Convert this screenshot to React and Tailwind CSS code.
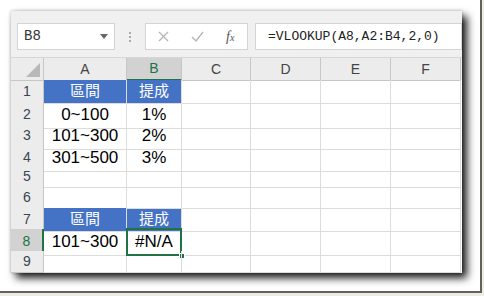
import React from 'react';

const rows = [
    { n: 1, h: 'h-[22px]', a: '區間', b: '提成', head: true },
    { n: 2, h: 'h-[21px]', a: '0~100', b: '1%' },
    { n: 3, h: 'h-[22px]', a: '101~300', b: '2%' },
    { n: 4, h: 'h-[21px]', a: '301~500', b: '3%' },
    { n: 5, h: 'h-[21px]' },
    { n: 6, h: 'h-[21px]' },
    { n: 7, h: 'h-[21px]', a: '區間', b: '提成', head: true },
    { n: 8, h: 'h-[22px]', a: '101~300', b: '#N/A', sel: true },
    { n: 9, h: 'h-[21px]' },
];

const gridCols = 'grid grid-cols-[33px_83px_55px_69px_70px_70px_70px]';
const cellFont = "font-['Liberation_Sans','Noto_Sans_CJK_TC',sans-serif]";

const Cell = ({ children, className = '' }) => (
    <div className={`flex items-center justify-center border-r border-b border-[#dcdcdc] ${className}`}>
        {children}
    </div>
);

const App = () => {
    return (
        <div className="w-[484px] h-[296px] bg-[#ececE4] overflow-hidden">
            <div className="w-[482px] h-[293px] bg-white border-r-2 border-b-2 border-[#62625a] pl-[11px] pt-[11px]">
                <div className="w-[451px] h-[262px] bg-white shadow-[5px_5px_8px_rgba(0,0,0,0.9),0_0_3px_rgba(0,0,0,0.25)] flex flex-col">
                    {/* formula bar */}
                    <div className="h-[47px] bg-[#f0f0f0] flex items-start pt-[12px] pl-[6px] border-b border-[#d6d6d6]">
                        <div className="w-[98px] h-[27px] bg-white border border-[#d4d4d4] flex items-center justify-between pl-[6px] pr-[6px]">
                            <span className="font-['Liberation_Mono',monospace] text-[14px] text-[#333]">B8</span>
                            <svg width="8" height="5" viewBox="0 0 8 5"><path d="M0 0h8L4 5z" fill="#666" /></svg>
                        </div>
                        <div className="w-[30px] h-[27px] flex flex-col items-center justify-center gap-[2px]">
                            <span className="w-[2px] h-[2px] bg-[#aaa]" />
                            <span className="w-[2px] h-[2px] bg-[#aaa]" />
                            <span className="w-[2px] h-[2px] bg-[#aaa]" />
                        </div>
                        <div className="w-[103px] h-[27px] bg-white border border-[#d4d4d4] flex items-center pl-[12px] gap-[22px]">
                            <svg width="11" height="11" viewBox="0 0 11 11"><path d="M1 1l9 9M10 1l-9 9" stroke="#b4b4b4" strokeWidth="1.3" /></svg>
                            <svg width="13" height="11" viewBox="0 0 13 11"><path d="M1 6l4 4 7-9" stroke="#b4b4b4" strokeWidth="1.3" fill="none" /></svg>
                            <span className="font-['Liberation_Serif',serif] italic text-[14px] text-[#555] leading-none">f<span className="text-[10px]">x</span></span>
                        </div>
                        <div className="ml-[7px] w-[207px] h-[27px] bg-white border border-[#d4d4d4] flex items-center pl-[12px]">
                            <span className="font-['Liberation_Mono',monospace] text-[13px] text-[#222]">=VLOOKUP(A8,A2:B4,2,0)</span>
                        </div>
                    </div>

                    {/* column headers */}
                    <div className={`${gridCols} h-[22px] bg-[#ececec] text-[14px] text-[#444] font-['Liberation_Sans',sans-serif]`}>
                        <div className="relative border-r border-b border-[#c6c6c6]">
                            <svg className="absolute right-[3px] bottom-[3px]" width="14" height="14" viewBox="0 0 14 14"><path d="M14 0v14H0z" fill="#b8b8b8" /></svg>
                        </div>
                        {['A', 'B', 'C', 'D', 'E', 'F'].map((c) => (
                            <div
                                key={c}
                                className={
                                    c === 'B'
                                        ? 'flex items-center justify-center border-r border-[#c6c6c6] border-b-2 border-b-[#217346] bg-[#d2d2d2] text-[#217346]'
                                        : 'flex items-center justify-center border-r border-b border-[#c6c6c6]'
                                }
                            >
                                {c}
                            </div>
                        ))}
                    </div>

                    {/* rows */}
                    {rows.map((r) => (
                        <div key={r.n} className={`${gridCols} ${r.h} ${cellFont}`}>
                            <div
                                className={
                                    r.sel
                                        ? 'flex items-center justify-center bg-[#d2d2d2] text-[#217346] text-[14px] border-b border-[#c6c6c6] border-r-2 border-r-[#217346]'
                                        : 'flex items-center justify-center bg-[#ececec] text-[#3a4452] text-[14px] border-r border-b border-[#c6c6c6]'
                                }
                            >
                                {r.n}
                            </div>
                            {r.head ? (
                                <>
                                    <Cell className="bg-[#4472c4] border-[#4472c4] text-white text-[15px]">{r.a}</Cell>
                                    <Cell className="bg-[#4472c4] border-[#4472c4] text-white text-[15px]">{r.b}</Cell>
                                </>
                            ) : (
                                <>
                                    <Cell className="text-[17px] text-black">{r.a}</Cell>
                                    <Cell className="relative text-[17px] text-black">
                                        {r.b}
                                        {r.sel && (
                                            <>
                                                <span className="absolute -left-[1px] -top-[1px] right-[-1px] bottom-[-1px] border-2 border-[#217346]" />
                                                <span className="absolute right-[-4px] bottom-[-4px] w-[6px] h-[6px] bg-[#217346] border border-white" />
                                            </>
                                        )}
                                    </Cell>
                                </>
                            )}
                            <Cell />
                            <Cell />
                            <Cell />
                            <Cell />
                        </div>
                    ))}
                </div>
            </div>
        </div>
    );
};

export default App;
